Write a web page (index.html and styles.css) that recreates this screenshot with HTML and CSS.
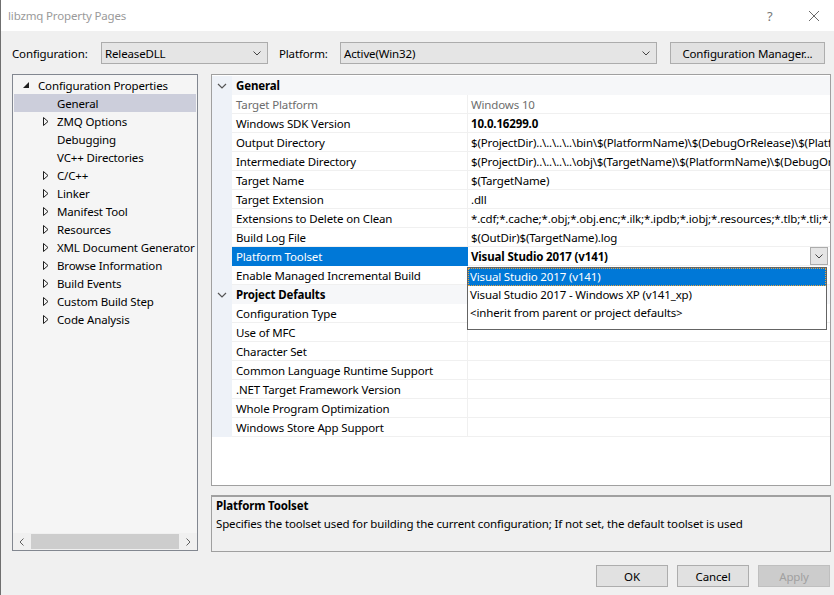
FILE: index.html
```html
<!DOCTYPE html>
<html>
<head>
<meta charset="utf-8">
<title>libzmq Property Pages</title>
<link rel="stylesheet" href="styles.css">
</head>
<body>
<div class="window">
  <div class="titlebar">
    <span class="title">libzmq Property Pages</span>
    <span class="tb-help">?</span>
    <span class="tb-close"><svg width="12" height="12" viewBox="0 0 12 12"><path d="M1 1 L11 11 M11 1 L1 11" stroke="#6a6a6a" stroke-width="1" fill="none"/></svg></span>
  </div>

  <div class="toolbar">
    <span class="lbl lbl-config">Configuration:</span>
    <div class="combo combo-config"><span class="combo-text">ReleaseDLL</span><svg class="chev" width="8" height="5" viewBox="0 0 8 5"><polyline points="0.5,0.5 4,4 7.5,0.5" fill="none" stroke="#444" stroke-width="1"/></svg></div>
    <span class="lbl lbl-platform">Platform:</span>
    <div class="combo combo-platform"><span class="combo-text">Active(Win32)</span><svg class="chev" width="8" height="5" viewBox="0 0 8 5"><polyline points="0.5,0.5 4,4 7.5,0.5" fill="none" stroke="#444" stroke-width="1"/></svg></div>
    <button class="btn btn-cm">Configuration Manager...</button>
  </div>

  <div class="main">
    <div class="tree">
      <div class="tree-items">
        <div class="tree-row lvl0"><span class="twisty"><svg width="6" height="6" viewBox="0 0 6 6"><path d="M6 0 L6 6 L0 6 Z" fill="#1e1e1e"/></svg></span><span>Configuration Properties</span></div>
        <div class="tree-row lvl1 selected"><span class="twisty"></span><span>General</span></div>
        <div class="tree-row lvl1"><span class="twisty"><svg width="6" height="9" viewBox="0 0 6 9"><path d="M0.5 0.5 L5 4.5 L0.5 8.5 Z" fill="none" stroke="#1e1e1e"/></svg></span><span>ZMQ Options</span></div>
        <div class="tree-row lvl1"><span class="twisty"></span><span>Debugging</span></div>
        <div class="tree-row lvl1"><span class="twisty"></span><span>VC++ Directories</span></div>
        <div class="tree-row lvl1"><span class="twisty"><svg width="6" height="9" viewBox="0 0 6 9"><path d="M0.5 0.5 L5 4.5 L0.5 8.5 Z" fill="none" stroke="#1e1e1e"/></svg></span><span>C/C++</span></div>
        <div class="tree-row lvl1"><span class="twisty"><svg width="6" height="9" viewBox="0 0 6 9"><path d="M0.5 0.5 L5 4.5 L0.5 8.5 Z" fill="none" stroke="#1e1e1e"/></svg></span><span>Linker</span></div>
        <div class="tree-row lvl1"><span class="twisty"><svg width="6" height="9" viewBox="0 0 6 9"><path d="M0.5 0.5 L5 4.5 L0.5 8.5 Z" fill="none" stroke="#1e1e1e"/></svg></span><span>Manifest Tool</span></div>
        <div class="tree-row lvl1"><span class="twisty"><svg width="6" height="9" viewBox="0 0 6 9"><path d="M0.5 0.5 L5 4.5 L0.5 8.5 Z" fill="none" stroke="#1e1e1e"/></svg></span><span>Resources</span></div>
        <div class="tree-row lvl1"><span class="twisty"><svg width="6" height="9" viewBox="0 0 6 9"><path d="M0.5 0.5 L5 4.5 L0.5 8.5 Z" fill="none" stroke="#1e1e1e"/></svg></span><span>XML Document Generator</span></div>
        <div class="tree-row lvl1"><span class="twisty"><svg width="6" height="9" viewBox="0 0 6 9"><path d="M0.5 0.5 L5 4.5 L0.5 8.5 Z" fill="none" stroke="#1e1e1e"/></svg></span><span>Browse Information</span></div>
        <div class="tree-row lvl1"><span class="twisty"><svg width="6" height="9" viewBox="0 0 6 9"><path d="M0.5 0.5 L5 4.5 L0.5 8.5 Z" fill="none" stroke="#1e1e1e"/></svg></span><span>Build Events</span></div>
        <div class="tree-row lvl1"><span class="twisty"><svg width="6" height="9" viewBox="0 0 6 9"><path d="M0.5 0.5 L5 4.5 L0.5 8.5 Z" fill="none" stroke="#1e1e1e"/></svg></span><span>Custom Build Step</span></div>
        <div class="tree-row lvl1"><span class="twisty"><svg width="6" height="9" viewBox="0 0 6 9"><path d="M0.5 0.5 L5 4.5 L0.5 8.5 Z" fill="none" stroke="#1e1e1e"/></svg></span><span>Code Analysis</span></div>
      </div>
      <div class="hscroll">
        <span class="sb-arrow"><svg width="5" height="8" viewBox="0 0 5 8"><polyline points="4.5,0.5 1,4 4.5,7.5" fill="none" stroke="#606060"/></svg></span>
        <span class="sb-thumb"></span>
        <span class="sb-arrow"><svg width="5" height="8" viewBox="0 0 5 8"><polyline points="0.5,0.5 4,4 0.5,7.5" fill="none" stroke="#606060"/></svg></span>
      </div>
    </div>

    <div class="right">
      <div class="grid">
        <div class="pg-row pg-cat"><span class="gut"><svg width="10" height="6" viewBox="0 0 10 6"><polyline points="1,1 5,5 9,1" fill="none" stroke="#555" stroke-width="1.2"/></svg></span><span class="cat-name">General</span></div>
        <div class="pg-row dim"><span class="gut"></span><span class="nm">Target Platform</span><span class="val">Windows 10</span></div>
        <div class="pg-row"><span class="gut"></span><span class="nm">Windows SDK Version</span><span class="val bold">10.0.16299.0</span></div>
        <div class="pg-row"><span class="gut"></span><span class="nm">Output Directory</span><span class="val">$(ProjectDir)..\..\..\..\bin\$(PlatformName)\$(DebugOrRelease)\$(PlatformToolset)\</span></div>
        <div class="pg-row"><span class="gut"></span><span class="nm">Intermediate Directory</span><span class="val">$(ProjectDir)..\..\..\..\obj\$(TargetName)\$(PlatformName)\$(DebugOrRelease)\</span></div>
        <div class="pg-row"><span class="gut"></span><span class="nm">Target Name</span><span class="val">$(TargetName)</span></div>
        <div class="pg-row"><span class="gut"></span><span class="nm">Target Extension</span><span class="val">.dll</span></div>
        <div class="pg-row"><span class="gut"></span><span class="nm">Extensions to Delete on Clean</span><span class="val">*.cdf;*.cache;*.obj;*.obj.enc;*.ilk;*.ipdb;*.iobj;*.resources;*.tlb;*.tli;*.tlh</span></div>
        <div class="pg-row"><span class="gut"></span><span class="nm">Build Log File</span><span class="val">$(OutDir)$(TargetName).log</span></div>
        <div class="pg-row sel"><span class="gut"></span><span class="nm">Platform Toolset</span><span class="val bold val-drop"><span class="val-text">Visual Studio 2017 (v141)</span><span class="drop-btn"><svg width="8" height="5" viewBox="0 0 8 5"><polyline points="0.5,0.5 4,4 7.5,0.5" fill="none" stroke="#444" stroke-width="1"/></svg></span></span></div>
        <div class="pg-row"><span class="gut"></span><span class="nm">Enable Managed Incremental Build</span><span class="val"></span></div>
        <div class="pg-row pg-cat"><span class="gut"><svg width="10" height="6" viewBox="0 0 10 6"><polyline points="1,1 5,5 9,1" fill="none" stroke="#555" stroke-width="1.2"/></svg></span><span class="cat-name">Project Defaults</span></div>
        <div class="pg-row"><span class="gut"></span><span class="nm">Configuration Type</span><span class="val"></span></div>
        <div class="pg-row"><span class="gut"></span><span class="nm">Use of MFC</span><span class="val"></span></div>
        <div class="pg-row"><span class="gut"></span><span class="nm">Character Set</span><span class="val"></span></div>
        <div class="pg-row"><span class="gut"></span><span class="nm">Common Language Runtime Support</span><span class="val"></span></div>
        <div class="pg-row"><span class="gut"></span><span class="nm">.NET Target Framework Version</span><span class="val"></span></div>
        <div class="pg-row"><span class="gut"></span><span class="nm">Whole Program Optimization</span><span class="val"></span></div>
        <div class="pg-row"><span class="gut"></span><span class="nm">Windows Store App Support</span><span class="val"></span></div>

        <div class="droplist">
          <div class="drop-item active">Visual Studio 2017 (v141)</div>
          <div class="drop-item">Visual Studio 2017 - Windows XP (v141_xp)</div>
          <div class="drop-item">&lt;inherit from parent or project defaults&gt;</div>
        </div>
      </div>
      <div class="desc">
        <div class="desc-title">Platform Toolset</div>
        <div class="desc-text">Specifies the toolset used for building the current configuration; If not set, the default toolset is used</div>
      </div>
    </div>
  </div>

  <div class="buttons">
    <button class="btn btn-dlg">OK</button>
    <button class="btn btn-dlg">Cancel</button>
    <button class="btn btn-dlg disabled">Apply</button>
  </div>
</div>
</body>
</html>
```

FILE: styles.css
```css
* { box-sizing: border-box; }
html, body { margin: 0; padding: 0; }
body {
  width: 834px;
  height: 595px;
  overflow: hidden;
  background: #f0f0f0;
  font-family: "Segoe UI", "Noto Sans", sans-serif;
  font-size: 11.5px;
  letter-spacing: -0.15px;
  color: #000;
}
.window {
  width: 834px;
  height: 595px;
  border-left: 1px solid #6f6f6f;
  background: #f0f0f0;
}
.titlebar {
  height: 31px;
  background: #fff;
  display: flex;
  align-items: center;
  padding-left: 7px;
}
.title { color: #9a9a9a; flex: 1; }
.tb-help { color: #777; width: 19px; margin-right: 22px; font-size: 13px; }
.tb-close { width: 26px; display: flex; align-items: center; }

.toolbar {
  margin-top: 11px;
  height: 22px;
  display: flex;
  align-items: center;
  padding-left: 11px;
}
.lbl { white-space: nowrap; }
.lbl-config { width: 89px; }
.lbl-platform { width: 61px; margin-left: 11px; }
.combo {
  height: 22px;
  background: #e5e5e5;
  border: 1px solid #acacac;
  display: flex;
  align-items: center;
  padding: 0 6px 0 3px;
}
.combo-text { flex: 1; }
.combo-config { width: 167px; }
.combo-platform { width: 317px; }
.btn {
  font: inherit;
  letter-spacing: inherit;
  color: #000;
  background: #e1e1e1;
  border: 1px solid #adadad;
  height: 22px;
  padding: 0;
}
.btn-cm { width: 155px; margin-left: 13px; }

.main {
  display: flex;
  margin-top: 10px;
  padding-left: 11px;
  gap: 13px;
}
.tree {
  width: 186px;
  height: 477px;
  border: 1px solid #828790;
  background: #f5f5f5;
  display: flex;
  flex-direction: column;
}
.tree-items { flex: 1; padding-top: 1px; }
.tree-row {
  height: 18px;
  display: flex;
  align-items: center;
  white-space: nowrap;
  margin: 0 1px;
  overflow: hidden;
}
.tree-row.lvl0 { padding-left: 9px; }
.tree-row.lvl0 .twisty { width: 15px; }
.tree-row.lvl1 { padding-left: 29px; }
.tree-row.lvl1 .twisty { width: 14px; }
.twisty { display: flex; align-items: center; height: 18px; flex-shrink: 0; }
.tree-row.selected { background: #cccedb; }
.hscroll {
  height: 17px;
  display: flex;
  align-items: center;
  background: #f0f0f0;
}
.sb-arrow { width: 17px; display: flex; justify-content: center; }
.sb-thumb { flex: 1; height: 15px; background: #cdcdcd; margin: 0 1px; }

.right { width: 620px; display: flex; flex-direction: column; gap: 9px; }
.grid {
  position: relative;
  height: 412px;
  border: 1px solid #a0a0a0;
  background: #fff;
  overflow: hidden;
  padding-top: 1px;
}
.pg-row {
  display: grid;
  grid-template-columns: 20px 236px 1fr;
  height: 19px;
}
.pg-row > span { display: flex; align-items: center; white-space: nowrap; overflow: hidden; }
.gut { background: #eef2f8; justify-content: center; }
.nm { padding-left: 4px; border-bottom: 1px solid #f0f0f0; border-right: 1px solid #f0f0f0; }
.val { padding-left: 3px; border-bottom: 1px solid #f0f0f0; }
.pg-cat { background: #f6f7f9; }
.pg-cat .gut { background: #eef2f8; }
.cat-name { grid-column: 2 / 4; font-weight: bold; padding-left: 4px; }
.dim .nm, .dim .val { color: #6d6d6d; }
.bold { font-weight: bold; }
.sel .nm { background: #0078d7; color: #fff; border-color: #0078d7; }
.val-drop { justify-content: space-between; padding-right: 2px; }
.drop-btn {
  width: 18px; height: 18px;
  background: #e5e5e5;
  border: 1px solid #acacac;
  display: flex; align-items: center; justify-content: center;
  flex-shrink: 0;
}

.droplist {
  position: absolute;
  left: 255px;
  top: 192px;
  width: 360px;
  height: 63px;
  background: #fff;
  border: 1px solid #646464;
  padding: 0;
}
.drop-item { height: 18px; line-height: 17px; padding-left: 2px; white-space: nowrap; }
.drop-item.active {
  background: #0078d7;
  color: #fff;
  outline: 1px dotted #e8a33c;
  outline-offset: -1px;
}

.desc {
  height: 57px;
  border: 1px solid #a0a0a0;
  border-top-width: 2px;
  background: #f0f0f0;
  padding: 0 4px;
}
.desc-title { font-weight: bold; height: 18px; line-height: 18px; }
.desc-text { height: 18px; line-height: 18px; }

.buttons {
  display: flex;
  justify-content: flex-end;
  gap: 9px;
  margin-top: 13px;
  padding-right: 4px;
}
.btn-dlg { width: 72px; }
.btn.disabled { background: #cccccc; border-color: #bfbfbf; color: #a0a0a0; }
```
